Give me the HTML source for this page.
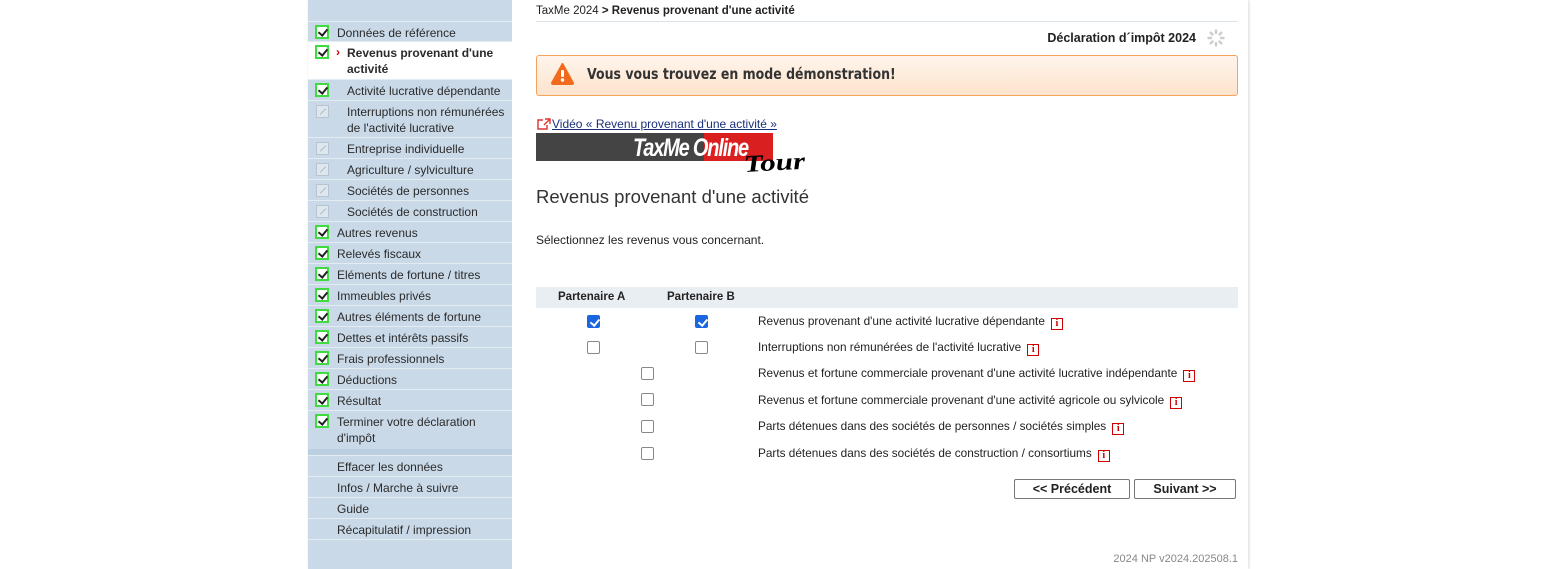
<!DOCTYPE html>
<html><head><meta charset="utf-8"><style>
*{margin:0;padding:0;box-sizing:border-box}
body{width:1550px;height:569px;background:#fff;font-family:"Liberation Sans",Arial,sans-serif;position:relative;overflow:hidden;color:#222}
#page{position:absolute;left:308px;top:0;width:940px;height:569px;background:#fff;box-shadow:1px 0 3px rgba(0,0,0,.15)}
#side{position:absolute;left:308px;top:0;width:204px;height:569px;background:#c9d9e8}
.it{position:absolute;left:0;width:204px;font-size:12px;line-height:16px;border-bottom:1px solid #e4ecf3;padding-left:29px;color:#2a2a2a}
.it.sub{padding-left:39px}
.cb{position:absolute;left:7px;width:14px;height:14px;border:2px solid #3fdc3f;background:#fff}
.cb:after{content:"";position:absolute;left:3px;top:0px;width:4px;height:7px;border:solid #222;border-width:0 2px 2px 0;transform:rotate(40deg)}
.gb{position:absolute;left:8px;width:13px;height:13px;border:1px solid #b5c4d0;background:#dfe7ee}
.gb:after{content:"";position:absolute;left:2px;top:5px;width:8px;height:1px;background:#a9b8c4;transform:rotate(-45deg)}
.ab{position:absolute;font-size:12px}
.chk{position:absolute;width:13px;height:13px;border:1px solid #888;border-radius:2px;background:#fff}
.chk.on{background:#1a66e0;border-color:#1a66e0}
.chk.on:after{content:"";position:absolute;left:3.5px;top:1px;width:3.5px;height:7px;border:solid #fff;border-width:0 2px 2px 0;transform:rotate(40deg)}
.lab{position:absolute;left:758px;font-size:11.8px}
.i{display:inline-block;width:12px;height:12px;border:1.5px solid #c00;color:#c00;font:bold 10px/9px "Liberation Serif",serif;text-align:center;margin-left:6px;vertical-align:-1px}
.btn{position:absolute;top:479px;height:20px;border:1px solid #777;border-radius:2px;background:#fff;font-size:12.5px;font-weight:bold;text-align:center;line-height:18px}
</style></head><body>
<div id="page"></div>
<div id="side">
<div class="it" style="top:21px;height:21px;padding-top:3px;border-top:1px solid #e4ecf3"><span class="cb" style="top:3px"></span>Données de référence</div>
<div class="it" style="top:42px;height:38px;padding-top:3px;background:#fff;font-weight:bold;padding-left:39px"><span class="cb" style="top:3px"></span><span style="position:absolute;left:28px;top:2px;color:#c00;font-weight:bold">›</span>Revenus provenant d'une activité</div>
<div class="it sub" style="top:80px;height:21px;padding-top:3px"><span class="cb" style="top:3px"></span>Activité lucrative dépendante</div>
<div class="it sub" style="top:101px;height:37px;padding-top:3px"><span class="gb" style="top:4px"></span>Interruptions non rémunérées de l'activité lucrative</div>
<div class="it sub" style="top:138px;height:21px;padding-top:3px"><span class="gb" style="top:4px"></span>Entreprise individuelle</div>
<div class="it sub" style="top:159px;height:21px;padding-top:3px"><span class="gb" style="top:4px"></span>Agriculture / sylviculture</div>
<div class="it sub" style="top:180px;height:21px;padding-top:3px"><span class="gb" style="top:4px"></span>Sociétés de personnes</div>
<div class="it sub" style="top:201px;height:21px;padding-top:3px"><span class="gb" style="top:4px"></span>Sociétés de construction</div>
<div class="it" style="top:222px;height:21px;padding-top:3px"><span class="cb" style="top:3px"></span>Autres revenus</div>
<div class="it" style="top:243px;height:21px;padding-top:3px"><span class="cb" style="top:3px"></span>Relevés fiscaux</div>
<div class="it" style="top:264px;height:21px;padding-top:3px"><span class="cb" style="top:3px"></span>Eléments de fortune / titres</div>
<div class="it" style="top:285px;height:21px;padding-top:3px"><span class="cb" style="top:3px"></span>Immeubles privés</div>
<div class="it" style="top:306px;height:21px;padding-top:3px"><span class="cb" style="top:3px"></span>Autres éléments de fortune</div>
<div class="it" style="top:327px;height:21px;padding-top:3px"><span class="cb" style="top:3px"></span>Dettes et intérêts passifs</div>
<div class="it" style="top:348px;height:21px;padding-top:3px"><span class="cb" style="top:3px"></span>Frais professionnels</div>
<div class="it" style="top:369px;height:21px;padding-top:3px"><span class="cb" style="top:3px"></span>Déductions</div>
<div class="it" style="top:390px;height:21px;padding-top:3px"><span class="cb" style="top:3px"></span>Résultat</div>
<div class="it" style="top:411px;height:38px;padding-top:3px;border-bottom:none"><span class="cb" style="top:3px"></span>Terminer votre déclaration d'impôt</div>
<div style="position:absolute;top:449px;left:0;width:204px;height:7px;background:#bccfe0;border-bottom:1px solid #e4ecf3"></div>
<div class="it" style="top:456px;height:21px;padding-top:3px">Effacer les données</div>
<div class="it" style="top:477px;height:21px;padding-top:3px">Infos / Marche à suivre</div>
<div class="it" style="top:498px;height:21px;padding-top:3px">Guide</div>
<div class="it" style="top:519px;height:21px;padding-top:3px">Récapitulatif / impression</div>
</div>

<div class="ab" style="left:536px;top:5px;font-size:11.5px">TaxMe 2024 <b>&gt; Revenus provenant d'une activité</b></div>
<div style="position:absolute;left:536px;top:21px;width:702px;height:1px;background:#dde3ea"></div>
<div class="ab" style="left:1000px;width:196px;text-align:right;top:31px;font-weight:bold;font-size:12.5px">Déclaration d´impôt 2024</div>
<svg style="position:absolute;left:1207px;top:29px" width="18" height="18" viewBox="0 0 18 18"><g stroke="#ccc" stroke-width="2.4" stroke-linecap="round"><path d="M9 1.5v2.5M9 14v2.5M1.5 9h2.5M14 9h2.5M3.7 3.7l1.8 1.8M12.5 12.5l1.8 1.8M3.7 14.3l1.8-1.8M12.5 5.5l1.8-1.8"/></g></svg>
<div style="position:absolute;left:536px;top:55px;width:702px;height:41px;border:1px solid #f3a35c;border-radius:3px;background:linear-gradient(#fff5ec,#fde3cc)"></div>
<svg style="position:absolute;left:551px;top:63px" width="23" height="22" viewBox="0 0 23 22"><path d="M11.5 1 L22 20 Q22 21 21 21 H2 Q1 21 1 20 Z" fill="#f26b1d" stroke="#f26b1d" stroke-linejoin="round" stroke-width="2"/><rect x="10" y="7" width="3" height="7" rx="1" fill="#fff"/><circle cx="11.5" cy="17" r="1.7" fill="#fff"/></svg>
<div class="ab" style="left:587px;top:65px;font:bold 15px 'DejaVu Sans',sans-serif;color:#333;transform:scaleX(.835);transform-origin:left;white-space:nowrap">Vous vous trouvez en mode démonstration!</div>
<svg style="position:absolute;left:537px;top:118px" width="14" height="12" viewBox="0 0 14 12"><path d="M6 2H1v9h9V7" fill="none" stroke="#d33" stroke-width="1.4"/><path d="M8 1h5v5M13 1L7 7" fill="none" stroke="#d33" stroke-width="1.4"/></svg>
<div class="ab" style="left:552px;top:117px;color:#1a2f7a;text-decoration:underline">Vidéo « Revenu provenant d'une activité »</div>
<div style="position:absolute;left:536px;top:133px;width:168px;height:28px;background:#444"></div>
<div style="position:absolute;left:704px;top:133px;width:69px;height:28px;background:#d91f1f"></div>
<div class="ab" style="left:633px;top:134px;font:italic bold 25px 'Liberation Sans Narrow','Liberation Sans',sans-serif;color:#fff;letter-spacing:-1.5px;transform:scaleX(.8);transform-origin:left">TaxMe Online</div>
<div class="ab" style="left:744px;top:152px;font:italic bold 24px 'Liberation Serif',serif;color:#000;transform:scaleX(1.3) rotate(-4deg);transform-origin:left">Tour</div>
<div class="ab" style="left:536px;top:186px;font-size:18.5px;color:#333">Revenus provenant d'une activité</div>
<div class="ab" style="left:536px;top:233px;font-size:12px">Sélectionnez les revenus vous concernant.</div>
<div style="position:absolute;left:536px;top:287px;width:702px;height:21px;background:#e9eef3"></div>
<div class="ab" style="left:558px;top:291px;font-weight:bold;font-size:11.5px">Partenaire A</div>
<div class="ab" style="left:667px;top:291px;font-weight:bold;font-size:11.5px">Partenaire B</div>
<span class="chk on" style="left:587px;top:315px"></span><span class="chk on" style="left:695px;top:315px"></span>
<span class="chk" style="left:587px;top:341px"></span><span class="chk" style="left:695px;top:341px"></span>
<span class="chk" style="left:641px;top:367px"></span><span class="chk" style="left:641px;top:393px"></span>
<span class="chk" style="left:641px;top:420px"></span><span class="chk" style="left:641px;top:447px"></span>
<div class="lab" style="top:314px">Revenus provenant d'une activité lucrative dépendante<span class="i">i</span></div>
<div class="lab" style="top:340px">Interruptions non rémunérées de l'activité lucrative<span class="i">i</span></div>
<div class="lab" style="top:366px">Revenus et fortune commerciale provenant d'une activité lucrative indépendante<span class="i">i</span></div>
<div class="lab" style="top:393px">Revenus et fortune commerciale provenant d'une activité agricole ou sylvicole<span class="i">i</span></div>
<div class="lab" style="top:419px">Parts détenues dans des sociétés de personnes / sociétés simples<span class="i">i</span></div>
<div class="lab" style="top:446px">Parts détenues dans des sociétés de construction / consortiums<span class="i">i</span></div>
<div class="btn" style="left:1014px;width:116px">&lt;&lt; Précédent</div>
<div class="btn" style="left:1134px;width:102px">Suivant &gt;&gt;</div>
<div class="ab" style="left:1000px;width:238px;text-align:right;top:553px;font-size:11px;color:#888">2024 NP v2024.202508.1</div>
</body></html>
